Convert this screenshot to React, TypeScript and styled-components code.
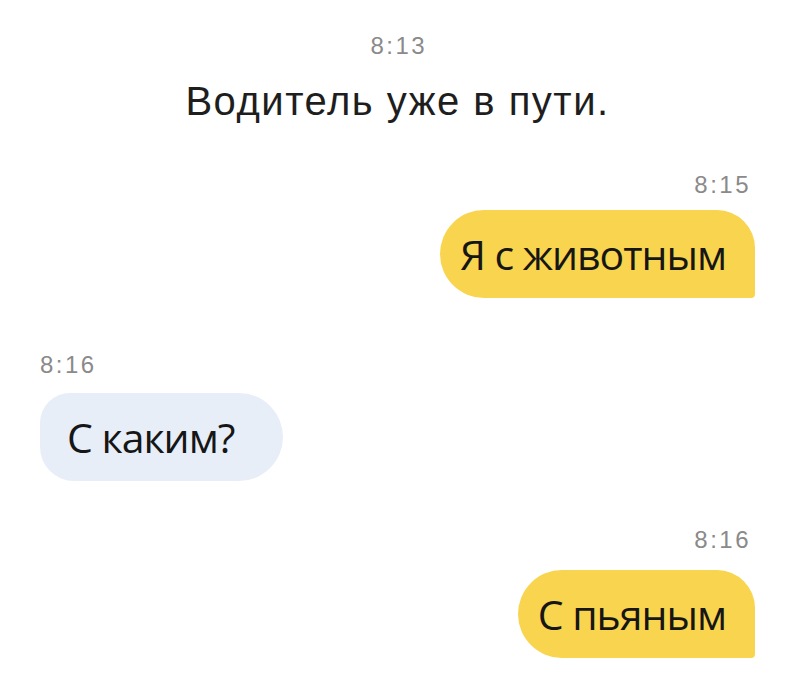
import React from "react";
import styled, { createGlobalStyle } from "styled-components";

const Global = createGlobalStyle`
  html, body {
    margin: 0;
    padding: 0;
    background: #ffffff;
  }
  body {
    font-family: "Liberation Sans", Arial, sans-serif;
  }
`;

const Chat = styled.main`
  width: 800px;
  height: 697px;
  box-sizing: border-box;
  padding: 34px 45px 0 40px;
  display: flex;
  flex-direction: column;
  background: #ffffff;
`;

const Status = styled.header`
  display: flex;
  flex-direction: column;
  align-items: center;
`;

const StatusTime = styled.div`
  font-family: "Liberation Sans", Arial, sans-serif;
  font-size: 24px;
  line-height: 24px;
  letter-spacing: 2.5px;
  padding-left: 2.5px;
  color: #8a8a8a;
`;

const StatusText = styled.div`
  margin-top: 23px;
  font-family: "Liberation Sans", Arial, sans-serif;
  font-size: 40px;
  line-height: 40px;
  letter-spacing: 1.5px;
  color: #1e1e1e;
`;

const Group = styled.section<{ $out?: boolean; $space: number }>`
  display: flex;
  flex-direction: column;
  align-items: ${(p) => (p.$out ? "flex-end" : "flex-start")};
  margin-top: ${(p) => p.$space}px;
`;

const Time = styled.div<{ $out?: boolean }>`
  font-family: "Liberation Sans", Arial, sans-serif;
  font-size: 24px;
  line-height: 24px;
  letter-spacing: 2.5px;
  color: #8a8a8a;
  padding: ${(p) => (p.$out ? "0 4px 0 0" : "0")};
`;

const Bubble = styled.div<{ $out?: boolean; $top: number }>`
  margin-top: ${(p) => p.$top}px;
  height: 88px;
  box-sizing: border-box;
  display: flex;
  align-items: center;
  font-family: "Open Sans", "Noto Sans", sans-serif;
  font-size: 41px;
  letter-spacing: -1px;
  color: #161616;
  white-space: nowrap;
  background: ${(p) => (p.$out ? "#f9d44e" : "#e8eef8")};
  padding: ${(p) => (p.$out ? "0 29px 0 20px" : "0 49px 0 27px")};
  border-radius: ${(p) => (p.$out ? "44px 38px 4px 44px" : "30px 44px 44px 34px")};
`;

type Msg = { time: string; text: string; out?: boolean; space: number; top: number };

const messages: Msg[] = [
  { time: "8:15", text: "Я с животным", out: true, space: 52, top: 13 },
  { time: "8:16", text: "С каким?", space: 55, top: 16 },
  { time: "8:16", text: "С пьяным", out: true, space: 47, top: 18 },
];

export default function App() {
  return (
    <>
      <Global />
      <Chat>
        <Status>
          <StatusTime>8:13</StatusTime>
          <StatusText>Водитель уже в пути.</StatusText>
        </Status>
        {messages.map((m, i) => (
          <Group key={i} $out={m.out} $space={m.space}>
            <Time $out={m.out}>{m.time}</Time>
            <Bubble $out={m.out} $top={m.top}>
              {m.text}
            </Bubble>
          </Group>
        ))}
      </Chat>
    </>
  );
}
